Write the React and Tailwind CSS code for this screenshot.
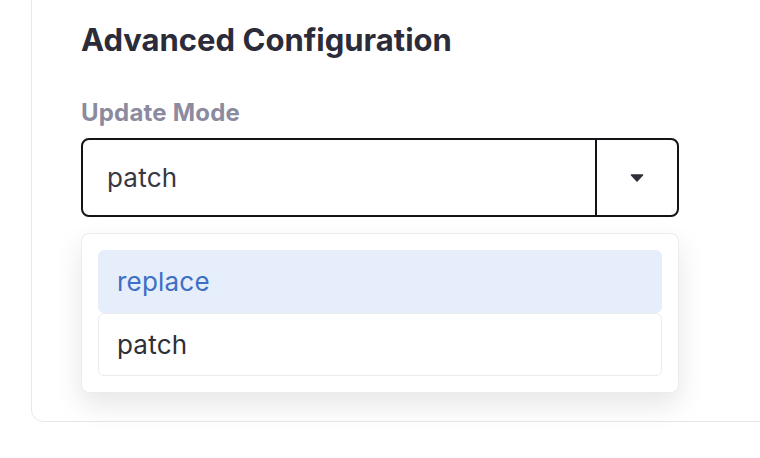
import React from 'react';

const FONT = { fontFamily: 'Inter, "Noto Sans", sans-serif' };

// Small filled caret used in the select's toggle button
const Caret = () => (
  <svg width="14" height="8" viewBox="0 0 14 8" className="text-[#2f2f3a]">
    <path d="M1.5 1h11L7 7z" fill="currentColor" stroke="currentColor" strokeWidth="1.5" strokeLinejoin="round" />
  </svg>
);

const options = [
  { value: 'replace', active: true },
  { value: 'patch', active: false },
];

export default function App() {
  return (
    <div className="h-[458px] w-[760px] overflow-hidden bg-white pl-[31px]" style={FONT}>
      <div className="-mt-[30px] w-[820px] rounded-xl border border-[#e8e8eb] pl-[49px] pt-[51px] pb-[28px]">
        <h2 className="text-[31px] leading-[36px] font-bold text-[#2b2b3a]">Advanced Configuration</h2>

        <label className="mt-[41px] block text-[24px] leading-[28px] font-bold tracking-[0.2px] text-[#8b8a9f]">Update Mode</label>

        {/* Select */}
        <div className="mt-[11px] flex h-[79px] w-[598px] rounded-lg border-2 border-[#121417] bg-white">
          <div className="flex flex-1 items-center pl-6 text-[26px] tracking-[0.2px] text-[#383841]">patch</div>
          <div className="flex w-[82px] items-center justify-center border-l-2 border-[#121417]">
            <Caret />
          </div>
        </div>

        {/* Dropdown menu */}
        <div className="mt-4 w-[598px] rounded-lg border border-[#ececef] bg-white p-4 shadow-[0_12px_28px_rgba(0,0,0,0.10)]">
          {options.map(opt => (
            <div
              key={opt.value}
              className={
                opt.active
                  ? 'flex h-[63px] items-center rounded-md border border-[#e6edfb] bg-[#e6edfb] pl-[18px] text-[26px] tracking-[0.2px] text-[#3d6fc6]'
                  : 'flex h-[63px] items-center rounded-md border border-[#ebebee] bg-white pl-[18px] text-[26px] tracking-[0.2px] text-[#2f2f37]'
              }
            >
              {opt.value}
            </div>
          ))}
        </div>
      </div>
    </div>
  );
}
